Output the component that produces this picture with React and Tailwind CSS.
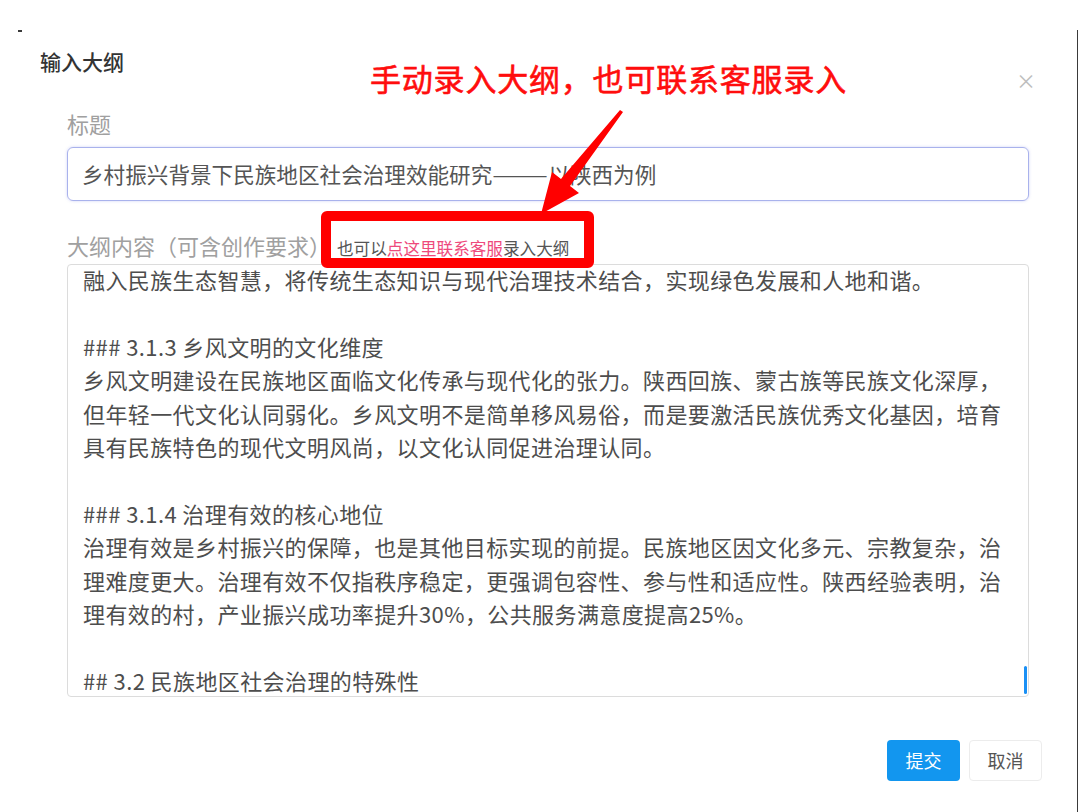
import React from 'react';

// 大纲正文（按截图中的换行逐行给出）
const outlineLines = [
  '融入民族生态智慧，将传统生态知识与现代治理技术结合，实现绿色发展和人地和谐。',
  '',
  '### 3.1.3 乡风文明的文化维度',
  '乡风文明建设在民族地区面临文化传承与现代化的张力。陕西回族、蒙古族等民族文化深厚，',
  '但年轻一代文化认同弱化。乡风文明不是简单移风易俗，而是要激活民族优秀文化基因，培育',
  '具有民族特色的现代文明风尚，以文化认同促进治理认同。',
  '',
  '### 3.1.4 治理有效的核心地位',
  '治理有效是乡村振兴的保障，也是其他目标实现的前提。民族地区因文化多元、宗教复杂，治',
  '理难度更大。治理有效不仅指秩序稳定，更强调包容性、参与性和适应性。陕西经验表明，治',
  '理有效的村，产业振兴成功率提升30%，公共服务满意度提高25%。',
  '',
  '## 3.2 民族地区社会治理的特殊性',
];

// 红色标注箭头
const Arrow = () => (
  <svg className="absolute left-0 top-0" width="1080" height="812" viewBox="0 0 1080 812">
    <polygon
      points="620,110 623,112 570,186 579,193 541,214 552,172 561,179"
      fill="#ff0000"
    />
  </svg>
);

export default function App() {
  return (
    <div className="relative w-[1080px] h-[812px] overflow-hidden bg-white font-['Noto_Sans_CJK_SC','Noto_Sans',sans-serif]">
      {/* 弹窗主体 */}
      <div className="ml-[18px] mt-[30px] w-[1060px] h-[782px] border-r-[1.5px] border-[#3a3a3a]">
        <div className="pl-[22px] pt-[17px] text-[21px] leading-[28px] font-medium text-[#333]">
          输入大纲
        </div>

        <div className="pl-[49px] pr-[48px] pt-[35px]">
          <div className="-mt-[2px] text-[22px] leading-[30px] text-[#a0a0a0]">标题</div>
          <div className="mt-[9px] h-[54px] rounded-[6px] border-[1.5px] border-[#a9b2ec] shadow-[0_0_3px_rgba(120,130,230,0.35)] flex items-center pl-[14px]">
            <span className="text-[21.6px] text-[#555] whitespace-nowrap">
              乡村振兴背景下民族地区社会治理效能研究
              <span className="inline-block w-[56px] origin-left scale-x-[1.55]">——</span>
              以陕西为例
            </span>
          </div>

          <div className="mt-[29px] flex items-baseline h-[30px]">
            <span className="text-[22px] leading-[30px] text-[#a0a0a0]">大纲内容（可含创作要求）</span>
            <span className="ml-[6px] text-[16.6px] text-[#555]">
              也可以<span className="text-[#ee4a7c]">点这里联系客服</span>录入大纲
            </span>
          </div>

          <div className="relative mt-[4px] h-[433px] rounded-[4px] border border-[#dcdcdc] overflow-hidden pl-[15px]">
            <div className="-mt-[2px]">
              {outlineLines.map((line, i) => (
                <div
                  key={i}
                  className="h-[33.4px] leading-[33.4px] text-[22px] tracking-[0.4px] text-[#4d4d4d] whitespace-nowrap"
                >
                  {line}
                </div>
              ))}
            </div>
            {/* 滚动条 */}
            <div className="absolute right-[1px] top-[401px] w-[3px] h-[28px] rounded-full bg-[#1a90f5]" />
          </div>
        </div>

        <div className="flex justify-end gap-[9px] pr-[35px] mt-[43px]">
          <button className="w-[73px] h-[41px] rounded-[4px] bg-[#1296ef] text-white text-[18px]">
            提交
          </button>
          <button className="w-[73px] h-[41px] rounded-[4px] border border-[#ececec] bg-white text-[#555] text-[18px]">
            取消
          </button>
        </div>
      </div>

      {/* 弹窗左上角残边 */}
      <div className="absolute left-[18px] top-[30px] w-[4px] h-[1.5px] bg-[#3a3a3a]" />

      {/* 关闭按钮 */}
      <div className="absolute left-[1016px] top-[69px] text-[20px] leading-[24px] text-[#bdbdbd]">×</div>

      {/* 红色标注 */}
      <div className="absolute left-[370px] top-[58px] text-[31px] leading-[40px] tracking-[0.8px] text-[#ff0d0d] whitespace-nowrap [-webkit-text-stroke:0.6px_#ff0d0d]">
        手动录入大纲，也可联系客服录入
      </div>
      <div className="absolute left-[321px] top-[211px] w-[273px] h-[57px] border-[10px] border-[#ff0000] rounded-[6px]" />
      <Arrow />
    </div>
  );
}
